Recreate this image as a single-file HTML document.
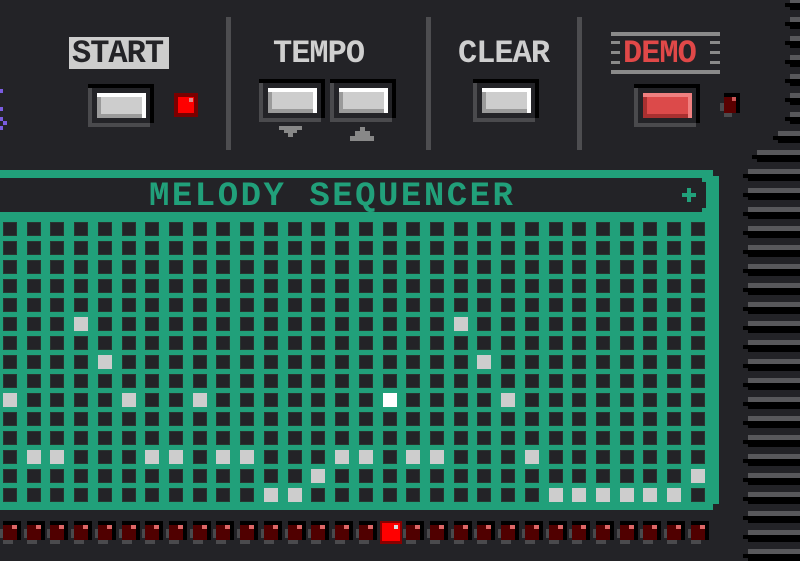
<!DOCTYPE html>
<html><head><meta charset="utf-8">
<style>
*{margin:0;padding:0;box-sizing:border-box}
body{width:800px;height:560px;background:#232327;position:relative;overflow:hidden;font-family:"Liberation Mono",monospace;}
.a{position:absolute}
.lbl{position:absolute;font-weight:bold;font-size:32px;line-height:32px;letter-spacing:-1px;color:#cfcfcf;white-space:nowrap}
.sep{position:absolute;width:5px;background:#4d4d50;top:17px;height:133px}
.btn{position:absolute;width:66px;height:43px}
.btn .o{position:absolute;left:0;top:0;width:66px;height:39px;background:#000}
.btn .gl{position:absolute;left:0;top:4px;width:4px;height:39px;background:#4a4a4d}
.btn .gb{position:absolute;left:0;top:39px;width:62px;height:4px;background:#4a4a4d}
.btn .in{position:absolute;left:4px;top:4px;width:58px;height:35px;background:#232327}
.btn .k{position:absolute;left:9px;top:9px;width:49px;height:25px;background:#fff}
.btn .f{position:absolute;left:9px;top:13px;width:45px;height:21px;background:#9a9a9a}
.btn .c{position:absolute;left:13px;top:13px;width:41px;height:17px;background:#cdcdcd}
.cell{position:absolute;width:14px;height:14px;background:#232327;box-shadow:inset 0 0 0 1px #283530}
.on{background:#cdcdcd;box-shadow:none}
.wh{background:#fff;box-shadow:none}
</style></head><body>

<div class="a" style="left:0;top:89px;width:3px;height:4px;background:#7a5ce0"></div>
<div class="a" style="left:0;top:107px;width:3px;height:4px;background:#7a5ce0"></div>
<div class="a" style="left:0;top:117px;width:3px;height:4px;background:#7a5ce0"></div>
<div class="a" style="left:3px;top:121px;width:4px;height:4px;background:#7a5ce0"></div>
<div class="a" style="left:0;top:126px;width:3px;height:4px;background:#7a5ce0"></div>

<div class="a" style="left:69px;top:37px;width:100px;height:32px;background:#cdcdcd"></div>
<div class="lbl" style="left:72px;top:38px;color:#232327">START</div>
<div class="btn" style="left:88px;top:84px"><div class="o"></div><div class="gl"></div><div class="gb"></div><div class="in"></div><div class="k"></div><div class="f"></div><div class="c"></div></div>
<div class="a" style="left:174px;top:93px;width:24px;height:24px;background:#7a0000"></div>
<div class="a" style="left:178px;top:97px;width:16px;height:16px;background:#ff0000"></div>
<div class="a" style="left:189px;top:98px;width:4px;height:4px;background:#d88"></div>

<div class="sep" style="left:226px"></div>

<div class="lbl" style="left:273px;top:38px">TEMPO</div>
<div class="btn" style="left:259px;top:79px"><div class="o"></div><div class="gl"></div><div class="gb"></div><div class="in"></div><div class="k"></div><div class="f"></div><div class="c"></div></div>
<div class="btn" style="left:330px;top:79px"><div class="o"></div><div class="gl"></div><div class="gb"></div><div class="in"></div><div class="k"></div><div class="f"></div><div class="c"></div></div>
<div class="a" style="left:279px;top:126px;width:23px;height:4px;background:#888"></div>
<div class="a" style="left:284px;top:130px;width:13px;height:3px;background:#888"></div>
<div class="a" style="left:288px;top:133px;width:5px;height:4px;background:#888"></div>
<div class="a" style="left:360px;top:127px;width:5px;height:4px;background:#888"></div>
<div class="a" style="left:355px;top:131px;width:15px;height:5px;background:#888"></div>
<div class="a" style="left:350px;top:136px;width:24px;height:5px;background:#888"></div>

<div class="sep" style="left:426px"></div>

<div class="lbl" style="left:458px;top:38px">CLEAR</div>
<div class="btn" style="left:473px;top:79px"><div class="o"></div><div class="gl"></div><div class="gb"></div><div class="in"></div><div class="k"></div><div class="f"></div><div class="c"></div></div>

<div class="sep" style="left:577px"></div>

<div class="a" style="left:611px;top:32px;width:109px;height:4px;background:#8a8a8a"></div>
<div class="a" style="left:611px;top:70px;width:109px;height:4px;background:#8a8a8a"></div>
<div class="a" style="left:611px;top:41px;width:9px;height:3px;background:#8a8a8a"></div>
<div class="a" style="left:611px;top:51px;width:9px;height:3px;background:#8a8a8a"></div>
<div class="a" style="left:611px;top:61px;width:9px;height:3px;background:#8a8a8a"></div>
<div class="a" style="left:710px;top:41px;width:10px;height:3px;background:#8a8a8a"></div>
<div class="a" style="left:710px;top:51px;width:10px;height:3px;background:#8a8a8a"></div>
<div class="a" style="left:710px;top:61px;width:10px;height:3px;background:#8a8a8a"></div>
<div class="lbl" style="left:623px;top:38px;color:#e04848">DEMO</div>
<div class="btn" style="left:634px;top:84px"><div class="o"></div><div class="gl"></div><div class="gb"></div><div class="in"></div><div class="k" style="background:#f08080"></div><div class="f" style="background:#a83030"></div><div class="c" style="background:#dc4a4a"></div></div>
<div class="a" style="left:724px;top:93px;width:16px;height:20px;background:#000"></div>
<div class="a" style="left:720px;top:103px;width:4px;height:8px;background:#4a4a4d"></div>
<div class="a" style="left:724px;top:113px;width:8px;height:4px;background:#4a4a4d"></div>
<div class="a" style="left:724px;top:97px;width:12px;height:16px;background:#5a0000"></div>
<div class="a" style="left:732px;top:97px;width:4px;height:4px;background:#c55"></div>

<div id="stripes"></div>

<div class="a" style="left:0;top:170px;width:713px;height:340px;background:#21a07a"></div>
<div class="a" style="left:713px;top:176px;width:6px;height:328px;background:#21a07a"></div>
<div class="a" style="left:0;top:178px;width:702px;height:34px;background:#232327"></div>
<div class="a" style="left:702px;top:182px;width:4px;height:26px;background:#232327"></div>
<div class="lbl" style="left:149px;top:180px;font-size:34px;line-height:34px;letter-spacing:2.5px;color:#21a07a">MELODY SEQUENCER</div>
<div class="a" style="left:682px;top:193px;width:14px;height:4px;background:#21a07a"></div>
<div class="a" style="left:687px;top:188px;width:4px;height:14px;background:#21a07a"></div>

<div id="grid"></div>
<div id="leds"></div>

<script>
var on={"5":[3,19],"7":[4,20],"9":[0,5,8,21],"12":[1,2,6,7,9,10,14,15,17,18,22],"13":[13,29],"14":[11,12,23,24,25,26,27,28]};
var g="";
for(var r=0;r<15;r++)for(var c=0;c<30;c++){
 var x=Math.round(3+c*23.72),y=222+r*19;
 var cls="cell";
 if(on[r]&&on[r].indexOf(c)>=0)cls+=" on";
 if(r==9&&c==16)cls+=" wh";
 g+='<div class="'+cls+'" style="left:'+x+'px;top:'+y+'px"></div>';
}
document.getElementById("grid").innerHTML=g;
var l="";
for(var c=0;c<30;c++){
 var x=Math.round(3+c*23.72);
 if(c==16){
  l+='<div class="a" style="left:'+(x-3)+'px;top:521px;width:22px;height:23px;background:#8a0000"></div>';
  l+='<div class="a" style="left:'+(x-1)+'px;top:523px;width:18px;height:18px;background:#ff0000"></div>';
  l+='<div class="a" style="left:'+(x+11)+'px;top:525px;width:4px;height:4px;background:#ddd"></div>';
 } else {
  l+='<div class="a" style="left:'+(x-3)+'px;top:529px;width:3px;height:9px;background:#4a4a4d"></div>';
  l+='<div class="a" style="left:'+x+'px;top:521px;width:18px;height:19px;background:#000"></div>';
  l+='<div class="a" style="left:'+x+'px;top:525px;width:14px;height:15px;background:#500000"></div>';
  l+='<div class="a" style="left:'+(x+9)+'px;top:525px;width:5px;height:4px;background:#d66"></div>';
  l+='<div class="a" style="left:'+x+'px;top:540px;width:10px;height:4px;background:#4a4a4d"></div>';
 }
}
document.getElementById("leds").innerHTML=l;
var s="";
for(var k=0;k<30;k++){
 var y=-2+19*k; if(y>560)break;
 var x= y>=169?748 : (y>=150?757:(y>=131?778:790));
 s+='<div class="a" style="left:'+x+'px;top:'+y+'px;width:'+(800-x)+'px;height:5px;background:#58585b"></div>';
 s+='<div class="a" style="left:'+x+'px;top:'+(y+5)+'px;width:'+(800-x)+'px;height:7px;background:#000"></div>';
 s+='<div class="a" style="left:'+(x-5)+'px;top:'+(y+5)+'px;width:5px;height:4px;background:#000"></div>';
}
document.getElementById("stripes").innerHTML=s;
</script>
</body></html>
